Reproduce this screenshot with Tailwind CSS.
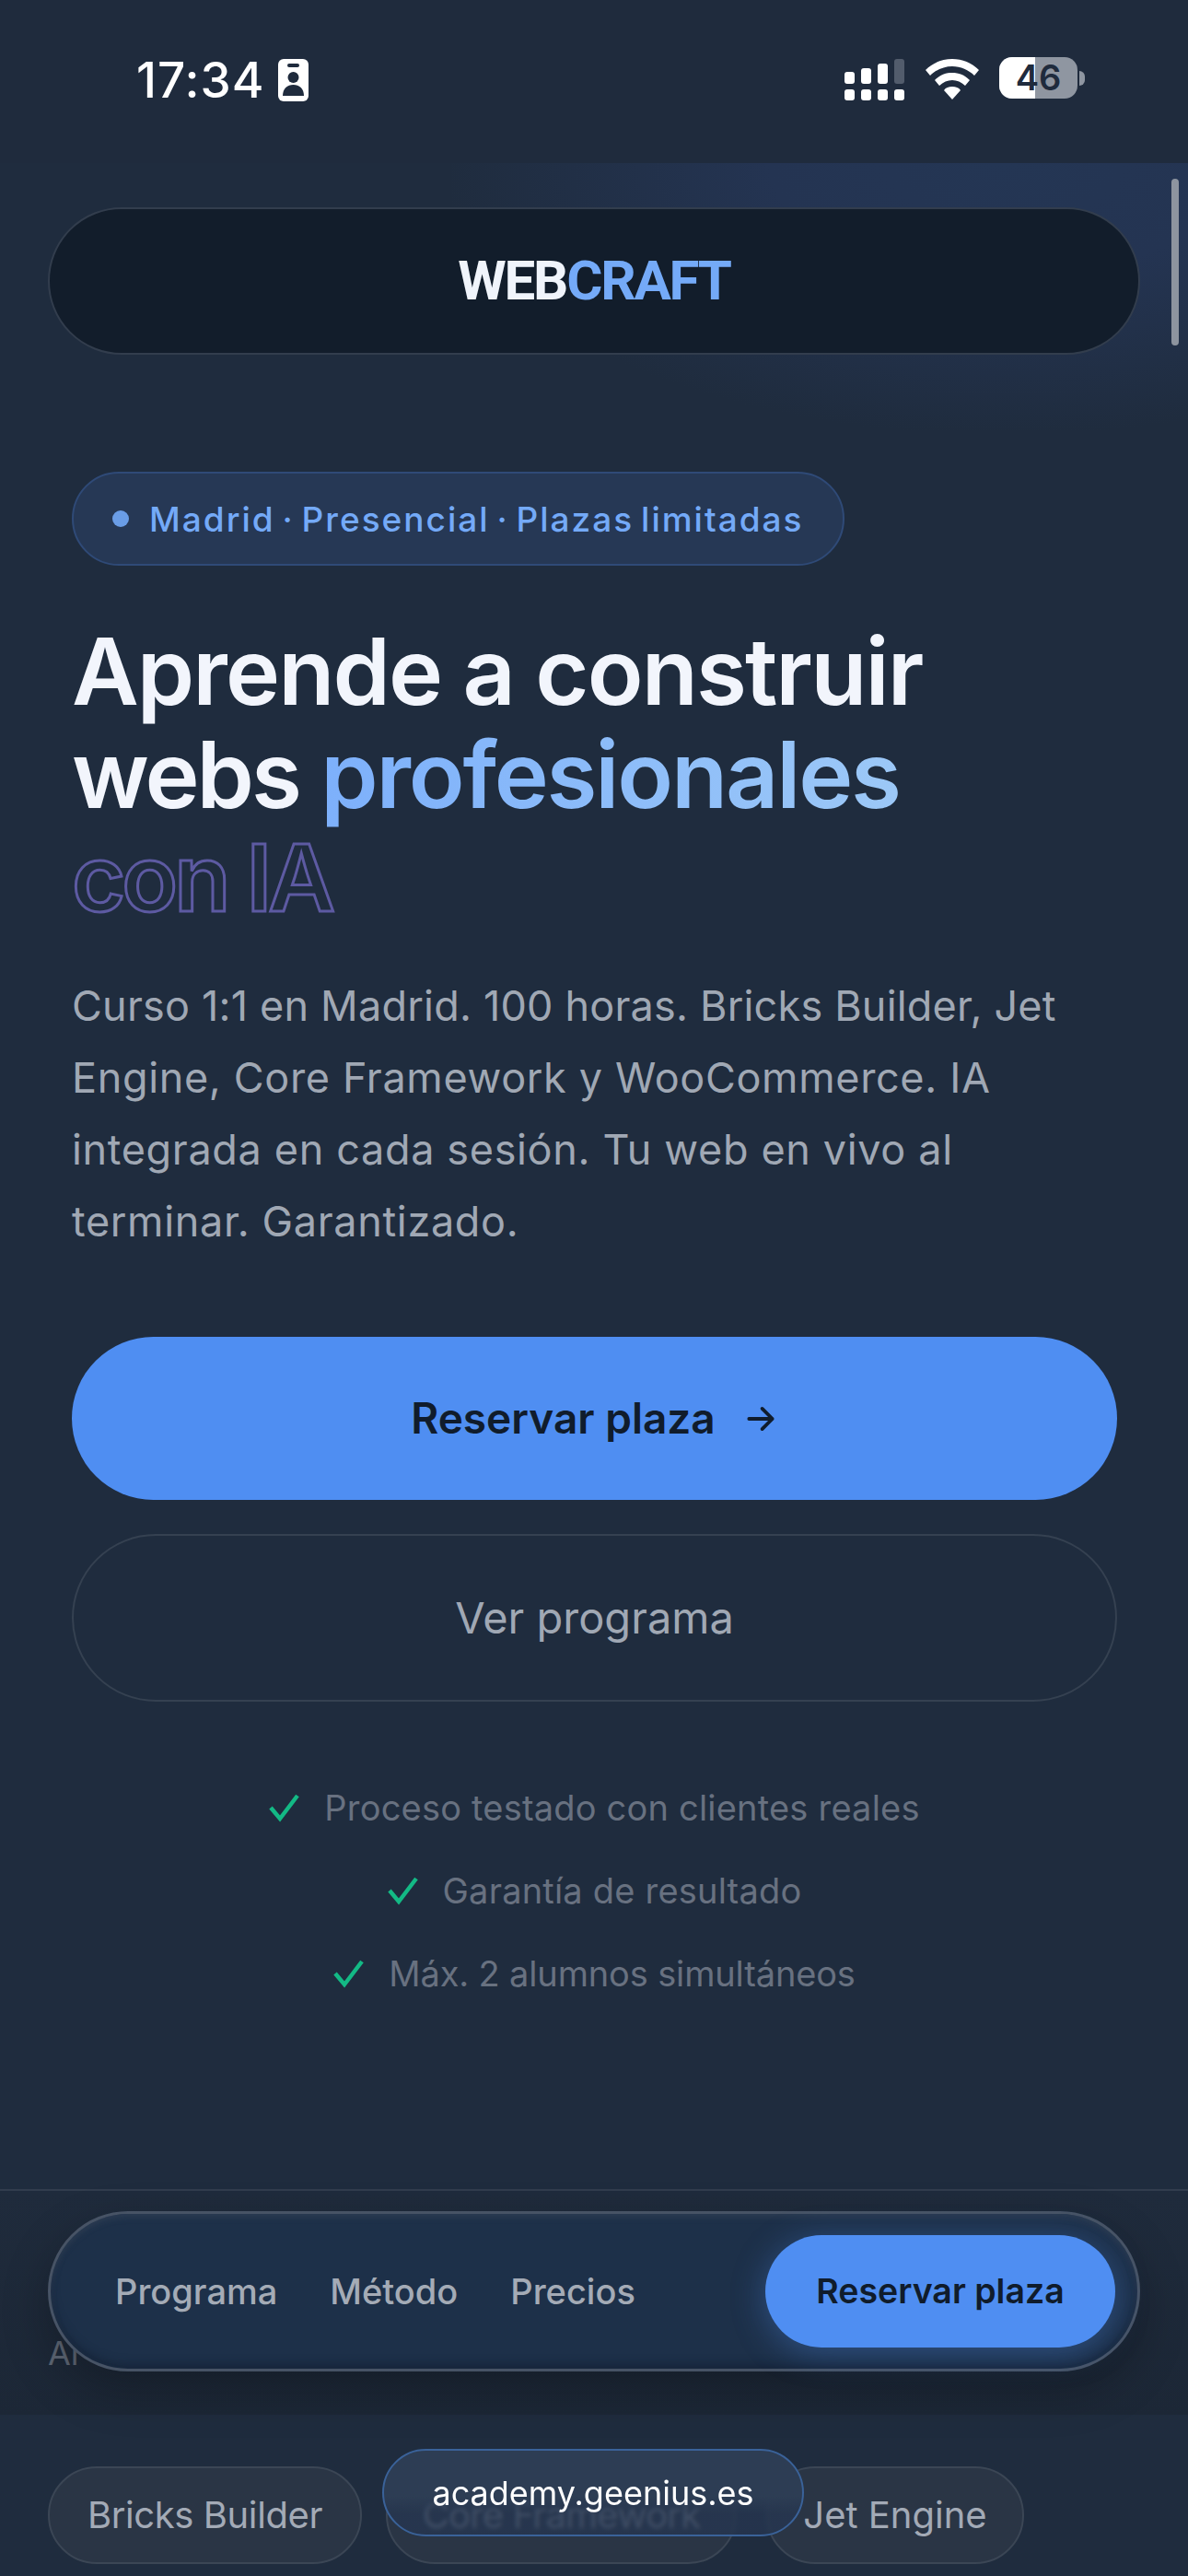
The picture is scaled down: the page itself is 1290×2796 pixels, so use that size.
<!DOCTYPE html>
<html lang="es">
<head>
<meta charset="utf-8">
<script src="https://cdn.jsdelivr.net/npm/@tailwindcss/browser@4"></script>
<title>WebCraft</title>
</head>
<body class="bg-[#1f2c3e]">
<div class="relative w-[1290px] h-[2796px] overflow-hidden bg-[#1f2c3e] font-['Inter',sans-serif]">

  <!-- status bar -->
  <div class="relative z-10 h-[177px] bg-[#1f2b3d] flex items-start justify-between pl-[148px] pr-[112px] pt-[62px] text-white">
    <div class="flex items-center gap-[14px]">
      <span class="text-[53px] leading-[50px] font-medium tracking-[1px]">17:34</span>
      <svg width="33" height="46" viewBox="0 0 33 46"><rect width="33" height="46" rx="6" fill="#fff"/><rect x="10" y="5" width="13" height="4" rx="2" fill="#1f2b3d"/><circle cx="16.5" cy="20" r="6" fill="#1f2b3d"/><path d="M5 40c0-8 5-12 11.500-12S28 32 28 40z" fill="#1f2b3d"/></svg>
    </div>
    <div class="flex items-start gap-[22px]">
      <svg width="66" height="46" viewBox="0 0 66 46" class="mt-[2px]" fill="#fff">
        <rect x="0" y="14" width="11" height="13" rx="3"/><rect x="18" y="10" width="11" height="17" rx="3"/><rect x="36" y="5" width="11" height="22" rx="3"/><rect x="54" y="0" width="11" height="27" rx="3" fill="#525c6c"/>
        <rect x="0" y="33" width="11" height="12" rx="3"/><rect x="18" y="33" width="11" height="12" rx="3"/><rect x="36" y="33" width="11" height="12" rx="3"/><rect x="54" y="33" width="11" height="12" rx="3"/>
      </svg>
      <svg width="58" height="44" viewBox="0 0 58 44" class="mt-[2px]" fill="#fff">
        <path d="M29 0c11 0 21 4 29 12l-5 6c-6-6-15-10-24-10S11 12 5 18l-5-6C8 4 18 0 29 0z"/>
        <path d="M29 15c7 0 13 2 19 8l-5 6c-4-4-9-6-14-6s-10 2-14 6l-5-6c6-6 12-8 19-8z"/>
        <path d="M29 30c4 0 7 1 9 4l-9 10-9-10c2-3 5-4 9-4z"/>
      </svg>
      <div class="flex items-center">
        <div class="relative w-[85px] h-[45px] rounded-[14px] bg-[#8f96a1] overflow-hidden text-center">
          <div class="absolute inset-y-0 left-0 w-[39px] bg-white"></div>
          <span class="relative text-[38px] leading-[45px] font-semibold text-[#1f2b3d]">46</span>
        </div>
        <div class="w-[6px] h-[16px] ml-[2px] rounded-r-full bg-[#8f96a1]"></div>
      </div>
    </div>
  </div>

  <!-- page -->
  <div class="absolute top-[177px] right-0 w-[800px] h-[290px] bg-[radial-gradient(ellipse_at_75%_0%,#243654_0%,#243452_30%,#1f2c3e_72%)]"></div>
  <div class="absolute top-[194px] right-[10px] w-[8px] h-[181px] rounded-full bg-[#8d949f]"></div>

  <main class="relative px-[52px] pt-[48px]">
    <header class="h-[160px] rounded-full bg-[#121d2b] border-2 border-[#323d4d] flex items-center justify-center">
      <span class="text-[60px] leading-none font-bold tracking-[-2.2px] text-[#f0f4fb] font-['Roboto',sans-serif]">WEB<span class="text-[#74aaf8]">CRAFT</span></span>
    </header>

    <section class="pl-[26px] pr-[25px] pt-[127px]">
      <div class="inline-flex items-center gap-[22px] h-[102px] px-[42px] rounded-full bg-[#263855] border-2 border-[#2f4a77]">
        <span class="w-[18px] h-[18px] rounded-full bg-[#6a9de6]"></span>
        <span class="text-[37px] leading-none font-medium tracking-[2px] [word-spacing:-4px] text-[#74aaf8]">Madrid · Presencial · Plazas limitadas</span>
      </div>

      <h1 class="mt-[59px] text-[100px] leading-[112px] font-semibold tracking-[-1.9px] text-[#f2f5fc]">
        Aprende a construir<br><span class="tracking-[-3px]">webs</span> <span class="tracking-[-2.200px] bg-gradient-to-r from-[#7db0fb] to-[#9cc8f7] bg-clip-text text-transparent">profesionales</span><br><span class="text-transparent [-webkit-text-stroke:3px_#5d5aa2] tracking-[-4px]">con IA</span>
      </h1>

      <p class="mt-[44px] text-[45px] leading-[78px] text-[#a0a8b4] tracking-[0.65px]"><span class="tracking-[0.2px]">Curso 1:1 en Madrid. 100 horas. Bricks Builder, Jet</span><br>Engine, Core Framework y WooCommerce. IA<br>integrada en cada sesión. Tu web en vivo al<br>terminar. Garantizado.</p>

      <a class="mt-[86px] h-[177px] rounded-full bg-[#4f8ef2] flex items-center justify-center gap-[30px] text-[#101c2c]">
        <span class="text-[46px] font-semibold">Reservar plaza</span>
        <svg width="38" height="38" viewBox="0 0 24 24" fill="none" stroke="#101c2c" stroke-width="2.4" stroke-linecap="round" stroke-linejoin="round"><path d="M4 12h16M13 5l7 7-7 7"/></svg>
      </a>
      <a class="mt-[37px] h-[182px] rounded-full border-2 border-[#354151] flex items-center justify-center text-[47px] text-[#a0a8b4]">Ver programa</a>

      <ul class="mt-[95px] flex flex-col items-center gap-[50px] text-[38px] leading-[40px] tracking-[0.2px] text-[#687180]">
        <li class="flex items-center gap-[26px]"><svg width="34" height="36" viewBox="0 0 34 36" fill="none" stroke="#13b985" stroke-width="4.500"><path d="M2 18l10 12L31 5"/></svg>Proceso testado con clientes reales</li>
        <li class="flex items-center gap-[26px]"><svg width="34" height="36" viewBox="0 0 34 36" fill="none" stroke="#13b985" stroke-width="4.500"><path d="M2 18l10 12L31 5"/></svg>Garantía de resultado</li>
        <li class="flex items-center gap-[26px] tracking-[-0.15px]"><svg width="34" height="36" viewBox="0 0 34 36" fill="none" stroke="#13b985" stroke-width="4.500"><path d="M2 18l10 12L31 5"/></svg>Máx. 2 alumnos simultáneos</li>
      </ul>
    </section>
  </main>

  <!-- lower band -->
  <div class="absolute left-0 right-0 top-[2376px] h-[245px] bg-gradient-to-b from-[#1f2b3c] to-[#1c2736] border-t-2 border-[#323d4d]"></div>
  <span class="absolute left-[52px] top-[2534px] text-[36px] leading-[40px] text-[#5d6674]">Al</span>

  <!-- tool chips -->
  <div class="absolute left-[52px] top-[2677px] flex gap-[26px]">
    <span class="w-[341px] h-[106px] justify-center rounded-full bg-[#2a3545] border-2 border-[#3b4655] flex items-center text-[40px] tracking-[-0.4px] text-[#a3aab6]">Bricks Builder</span>
    <span class="w-[381px] h-[106px] justify-center rounded-full bg-[#2a3545] border-2 border-[#3b4655] flex items-center text-[40px] tracking-[-0.85px] text-[#a3aab6]">Core Framework</span>
    <span class="w-[280px] h-[106px] ml-[6px] justify-center rounded-full bg-[#2a3545] border-2 border-[#3b4655] flex items-center text-[40px] text-[#a3aab6]">Jet Engine</span>
  </div>

  <!-- floating nav -->
  <nav class="absolute left-[52px] top-[2400px] w-[1186px] h-[174px] rounded-full bg-[#1d3049] border-[3px] border-[#475365] shadow-[0_20px_50px_rgba(0,0,0,0.25),inset_0_4px_6px_rgba(71,83,101,0.35),inset_0_-6px_8px_rgba(18,30,48,0.5)] flex items-center pl-[70px] pr-[24px]">
    <div class="flex gap-[57px] text-[38px] font-medium text-[#a4abb6]">
      <span>Programa</span><span>Método</span><span>Precios</span>
    </div>
    <span class="ml-auto w-[380px] h-[122px] rounded-full bg-[#4f8ef2] shadow-[0_6px_36px_rgba(79,142,242,0.35)] flex items-center justify-center text-[37.500px] font-semibold text-[#101c2c]">Reservar plaza</span>
  </nav>

  <!-- browser url pill -->
  <div class="absolute left-[415px] top-[2658px] w-[458px] h-[95px] rounded-full bg-gradient-to-b from-[#2d3d54] from-55% to-[#263650]/80 to-75% backdrop-blur-[2px] border-2 border-[#3a6299] flex items-center justify-center text-[36px] text-white">academy.geenius.es</div>
</div>
</body>
</html>
